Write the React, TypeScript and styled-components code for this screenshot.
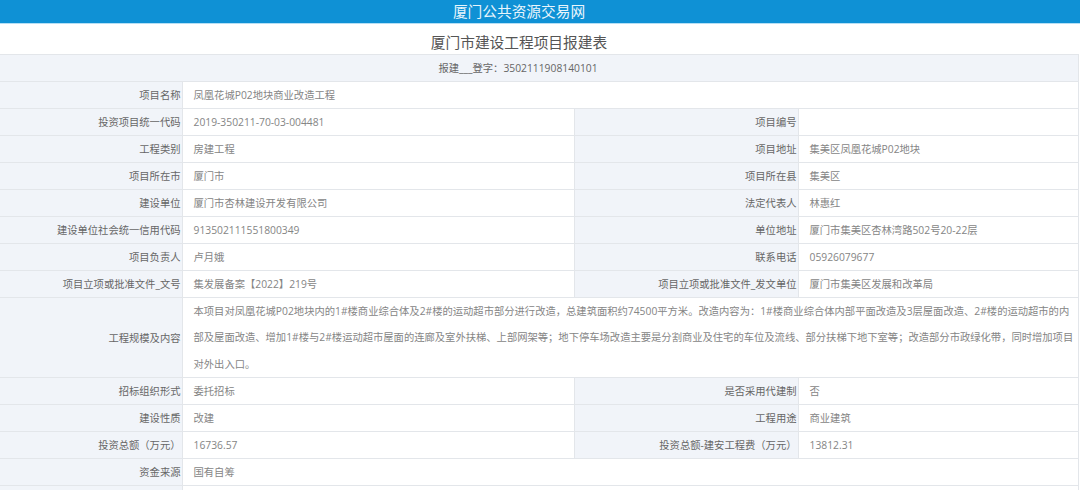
import React from "react";
import styled, { createGlobalStyle } from "styled-components";

const GlobalStyle = createGlobalStyle`
  html, body {
    margin: 0;
    padding: 0;
    background: #fff;
    overflow: hidden;
  }
  body {
    font-family: "Open Sans", "Noto Sans CJK SC", sans-serif;
  }
`;

type Row = { l1: string; v1: string; l2?: string; v2?: string; tall?: boolean };

const rows: Row[] = [
  { l1: "项目名称", v1: "凤凰花城P02地块商业改造工程" },
  { l1: "投资项目统一代码", v1: "2019-350211-70-03-004481", l2: "项目编号", v2: "" },
  { l1: "工程类别", v1: "房建工程", l2: "项目地址", v2: "集美区凤凰花城P02地块" },
  { l1: "项目所在市", v1: "厦门市", l2: "项目所在县", v2: "集美区" },
  { l1: "建设单位", v1: "厦门市杏林建设开发有限公司", l2: "法定代表人", v2: "林惠红" },
  { l1: "建设单位社会统一信用代码", v1: "913502111551800349", l2: "单位地址", v2: "厦门市集美区杏林湾路502号20-22层" },
  { l1: "项目负责人", v1: "卢月娥", l2: "联系电话", v2: "05926079677" },
  { l1: "项目立项或批准文件_文号", v1: "集发展备案【2022】219号", l2: "项目立项或批准文件_发文单位", v2: "厦门市集美区发展和改革局" },
  {
    l1: "工程规模及内容",
    tall: true,
    v1: "本项目对凤凰花城P02地块内的1#楼商业综合体及2#楼的运动超市部分进行改造，总建筑面积约74500平方米。改造内容为：1#楼商业综合体内部平面改造及3层屋面改造、2#楼的运动超市的内部及屋面改造、增加1#楼与2#楼运动超市屋面的连廊及室外扶梯、上部网架等；地下停车场改造主要是分割商业及住宅的车位及流线、部分扶梯下地下室等；改造部分市政绿化带，同时增加项目对外出入口。",
  },
  { l1: "招标组织形式", v1: "委托招标", l2: "是否采用代建制", v2: "否" },
  { l1: "建设性质", v1: "改建", l2: "工程用途", v2: "商业建筑" },
  { l1: "投资总额（万元）", v1: "16736.57", l2: "投资总额-建安工程费（万元）", v2: "13812.31" },
  { l1: "资金来源", v1: "国有自筹" },
  { l1: "", v1: "" },
];

export default function App() {
  return (
    <Page>
      <GlobalStyle />
      <TopBar>厦门公共资源交易网</TopBar>
      <Title>厦门市建设工程项目报建表</Title>
      <Table>
        <colgroup>
          <col width={182} />
          <col width={392} />
          <col width={224} />
          <col />
        </colgroup>
        <tbody>
          <tr>
            <Caption colSpan={4}>报建___登字：3502111908140101</Caption>
          </tr>
          {rows.map((r, i) => (
            <tr key={i}>
              <Label>{r.l1}</Label>
              {r.l2 === undefined ? (
                <Value colSpan={3} $tall={r.tall}>{r.v1}</Value>
              ) : (
                <>
                  <Value>{r.v1}</Value>
                  <Label>{r.l2}</Label>
                  <Value>{r.v2}</Value>
                </>
              )}
            </tr>
          ))}
        </tbody>
      </Table>
    </Page>
  );
}

const Page = styled.div`
  width: 1080px;
  height: 490px;
  overflow: hidden;
  background: #fff;
`;

const TopBar = styled.div`
  height: 23px;
  line-height: 22px;
  padding-right: 42px;
  background: #0f91d5;
  border-bottom: 1px solid #b5dff5;
  color: #e8f5fc;
  font-size: 14.7px;
  text-align: center;
`;

const Title = styled.h1`
  margin: 0;
  height: 30px;
  line-height: 37px;
  padding-right: 42px;
  color: #555;
  font-size: 14.7px;
  font-weight: 400;
  text-align: center;
`;

const Table = styled.table`
  width: 1079px;
  table-layout: fixed;
  border-collapse: collapse;
  border: 1px solid #e3e6ea;
  border-left: 0;
  font-size: 10.3px;
`;

const Caption = styled.td`
  height: 27px;
  padding: 0 42px 1px 0;
  box-sizing: border-box;
  border-bottom: 1px solid #e3e6ea;
  background: #f1f4f9;
  color: #666;
  text-align: center;
`;

const Label = styled.td`
  height: 27px;
  padding: 0 1px 1px 0;
  box-sizing: border-box;
  border: 1px solid #e3e6ea;
  border-left: 0;
  background: #f1f4f9;
  color: #666;
  text-align: right;
  white-space: nowrap;
`;

const Value = styled.td<{ $tall?: boolean }>`
  height: 27px;
  padding: ${(p) => (p.$tall ? "0 2px 0 11px" : "0 2px 1px 11px")};
  box-sizing: border-box;
  border: 1px solid #e3e6ea;
  background: #fff;
  color: #858585;
  line-height: ${(p) => (p.$tall ? "26.4px" : "normal")};
`;
